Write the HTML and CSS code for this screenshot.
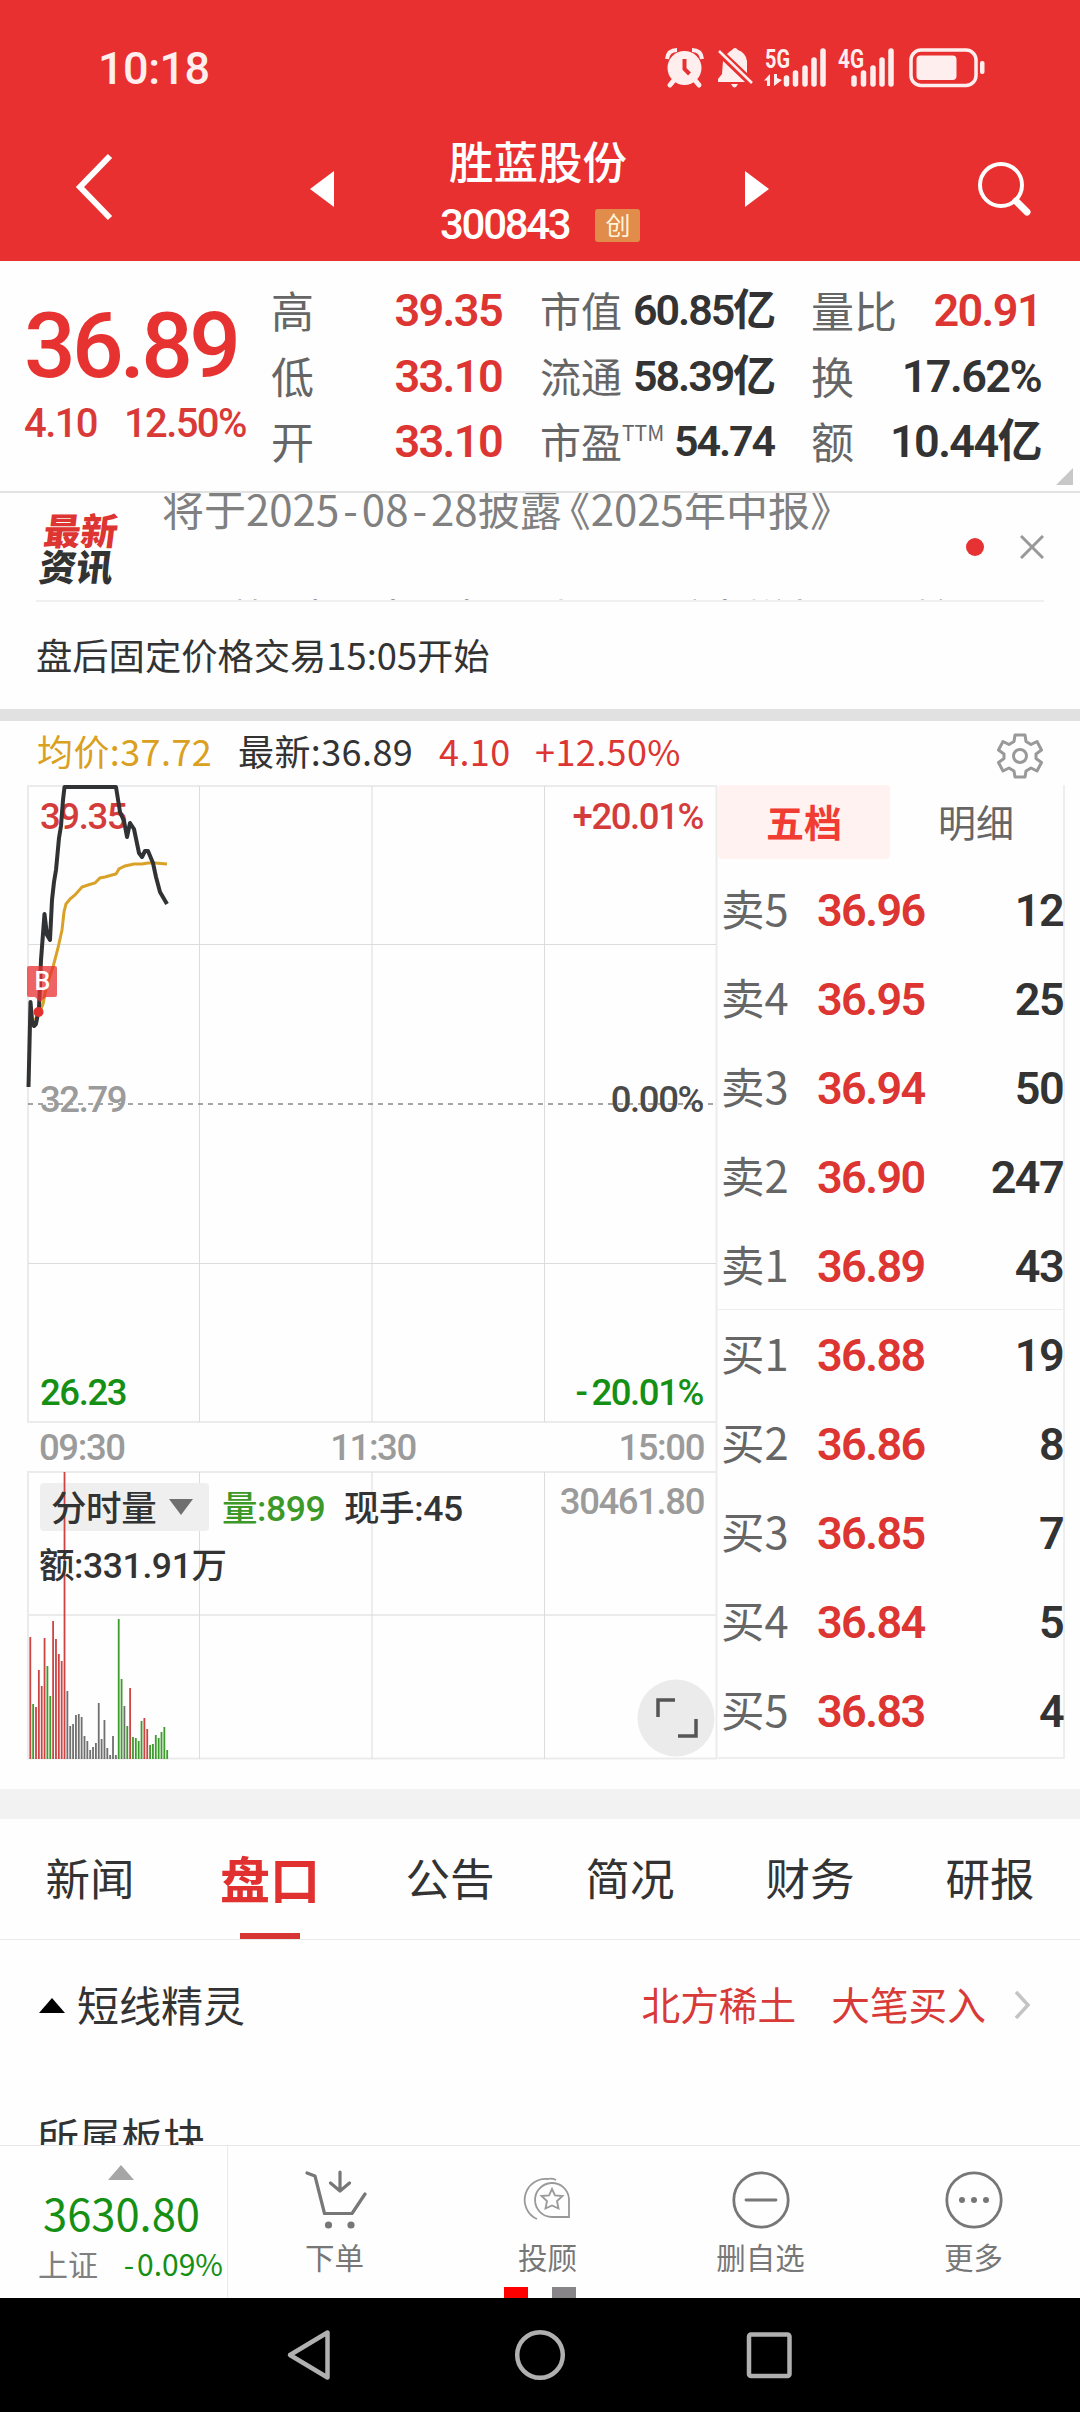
FILE: index.html
```html
<!DOCTYPE html>
<html lang="zh-CN">
<head>
  <meta charset="utf-8">
  <meta name="viewport" content="width=device-width, initial-scale=1.0">
  <title>胜蓝股份 300843</title>
  <link rel="stylesheet" href="styles.css">
</head>
<body>
  <header class="header">
    <div class="status-bar">
      <span class="clock num">10:18</span>
      <svg class="status-icons" width="326" height="44" viewBox="662 46 326 44" fill="#ffeeee">
        <!-- alarm -->
        <circle cx="684.5" cy="68" r="17"/>
        <path d="M667 59q1-9 10-9M702 59q-1-9-10-9" fill="none" stroke="#ffeeee" stroke-width="4"/>
        <path d="M675 79l-5 6M694 79l5 6" stroke="#ffeeee" stroke-width="5" stroke-linecap="round"/>
        <path d="M684.500 59v10l5 5" fill="none" stroke="#e83030" stroke-width="4"/>
        <!-- bell off -->
        <path d="M723 61L745 82H718V79L722 74ZM727 54Q730 51 732 50Q735 46 738 50Q746 53 747 61V73Z"/>
        <path d="M719 51L752 83" stroke="#ffeeee" stroke-width="2.600"/>
        <path d="M731 84h7q-3.500 7-7 0"/>
        <!-- sim 1 -->
        <text x="765" y="67.500" class="net" textLength="25" lengthAdjust="spacingAndGlyphs">5G</text>
        <path d="M770 86V74L764 80.500H767V86ZM774 74V86L782 80L777 78V74Z"/>
        <path d="M786.500 78v6M795.500 73v11M805 68v16M814 60v24M823 51v33" stroke="#ffeeee" stroke-width="5.500" stroke-linecap="round"/>
        <!-- sim 2 -->
        <text x="838" y="67.500" class="net" textLength="26" lengthAdjust="spacingAndGlyphs">4G</text>
        <path d="M854 78v6M863.500 73v11M873 68v16M882 60v24M891 51v33" stroke="#ffeeee" stroke-width="5.500" stroke-linecap="round"/>
        <!-- battery -->
        <rect x="911" y="50" width="65" height="35.500" rx="10" fill="none" stroke="#ffeeee" stroke-width="3.500"/>
        <rect x="916.500" y="55.500" width="40" height="24.500" rx="4"/>
        <rect x="980" y="61" width="4.500" height="13" rx="2"/>
      </svg>
    </div>
    <div class="title-bar">
      <svg class="back" width="40" height="68" viewBox="0 0 40 68"><path d="M35 3L5 34L35 65" fill="none" stroke="#fff" stroke-width="6"/></svg>
      <svg class="prev" width="24" height="36" viewBox="0 0 24 36"><path d="M24 0V36L0 18Z" fill="#fff"/></svg>
      <div class="stock">
        <div class="stock-name">胜蓝股份</div>
        <div class="stock-code"><span class="num">300843</span><span class="badge">创</span></div>
      </div>
      <svg class="next" width="24" height="36" viewBox="0 0 24 36"><path d="M0 0V36L24 18Z" fill="#fff"/></svg>
      <svg class="search" width="54" height="56" viewBox="0 0 54 56" fill="none" stroke="#fff"><circle cx="23" cy="24" r="21" stroke-width="4"/><path d="M38 40L49 51" stroke-width="7" stroke-linecap="round"/></svg>
    </div>
  </header>

  <section class="quote">
    <div class="price-box">
      <div class="price num">36.89</div>
      <div class="change num"><span>4.10</span><span>12.50%</span></div>
    </div>
    <dl class="stats stats-a">
      <div><dt>高</dt><dd class="num red">39.35</dd></div>
      <div><dt>低</dt><dd class="num red">33.10</dd></div>
      <div><dt>开</dt><dd class="num red">33.10</dd></div>
    </dl>
    <dl class="stats stats-b">
      <div><dt>市值</dt><dd class="num">60.85亿</dd></div>
      <div><dt>流通</dt><dd class="num">58.39亿</dd></div>
      <div><dt class="pe">市盈<sup>TTM</sup></dt><dd class="num">54.74</dd></div>
    </dl>
    <dl class="stats stats-c">
      <div><dt>量比</dt><dd class="num red">20.91</dd></div>
      <div><dt>换</dt><dd class="num">17.62%</dd></div>
      <div><dt>额</dt><dd class="num">10.44亿</dd></div>
    </dl>
    <i class="corner"></i>
  </section>

  <section class="news">
    <div class="news-logo"><span class="red">最新</span><span>资讯</span></div>
    <div class="news-text">
      <p>将于2025<span class="dash">-</span>08<span class="dash">-</span>28披露<span class="open">《</span>2025年中报》</p>
      <p class="upcoming">最近解读：本到机器人AI、手术增长：开始</p>
    </div>
    <i class="dot"></i>
    <svg class="close" width="24" height="24" viewBox="0 0 24 24"><path d="M1 1L23 23M23 1L1 23" stroke="#999" stroke-width="3"/></svg>
  </section>
  <div class="notice">盘后固定价格交易15:05开始</div>
  <div class="divider"></div>

  <div class="summary">
    <span class="avg">均价:37.72</span>
    <span class="last">最新:36.89</span>
    <span class="red diff">4.10</span>
    <span class="red pct">+12.50%</span>
    <svg class="gear" width="46" height="46" viewBox="-23 -23 46 46" fill="none" stroke="#999" stroke-width="3" stroke-linejoin="round">
      <path d="M-5-21H5L6-14.500L11-11.500L17-14.500L21.500-6L16-2V2.500L21.500 6.500L17 15L11 12L6 15L5 21H-5L-6 15L-11 12L-17 15L-21.500 6.500L-16 2.500V-2L-21.500-6L-17-14.500L-11-11.500L-6-14.500Z"/>
      <circle r="6.500"/>
    </svg>
  </div>

  <section class="board">
    <svg class="chart" width="718" height="976" viewBox="0 785 718 976">
      <g class="grid">
        <path d="M27 786H717M27 1422H717M27 1472H717M27 1615H717M27 1758.500H717" stroke-width="2"/>
        <path d="M28 786V1422M28 1472V1759M716.500 786V1759" stroke-width="2"/>
        <path class="thin" d="M28 944.500H716M28 1263.500H716M199.500 786V1422M372 786V1422M544.500 786V1422M199.500 1472V1759M372 1472V1759M544.500 1472V1759"/>
      </g>
      <path d="M28 1104H716" stroke="#888" stroke-width="1.500" stroke-dasharray="5 5"/>

      <rect x="40" y="1483" width="169" height="48" rx="4" fill="#f0eff0"/>
      <g id="volume"></g>

      <g class="axis">
        <text x="40" y="828.500" class="up">39.35</text>
        <text x="40" y="1112" class="flat">32.79</text>
        <text x="40" y="1405" class="down">26.23</text>
        <text x="703" y="828.500" class="up end">+20.01%</text>
        <text x="703" y="1112" class="mid end">0.00%</text>
        <text x="703" y="1405" class="down end">-<tspan dx="5">20.01%</tspan></text>
        <text x="39" y="1460" class="flat">09:30</text>
        <text x="373" y="1460" class="flat center">11:30</text>
        <text x="704" y="1460" class="flat end">15:00</text>
        <text x="704" y="1514" class="flat end">30461.80</text>
      </g>
      <g class="volume-info">
        <text x="51" y="1521">分时量</text>
        <path d="M169 1499H193L181 1515Z" fill="#706f70"/>
        <text x="222" y="1521" class="vol">量:899</text>
        <text x="344" y="1521">现手:45</text>
        <text x="39" y="1578">额:331.91万</text>
      </g>

      <polyline fill="none" stroke="#d9a127" stroke-width="3" points="35,1020 40,1011 43,1004 47,984 53,967 58,948 62,930 64,912 66,904 70,899 75,895 82,887 88,885 95,883 100,878 105,877 112,875 116,874 119,869 125,866 134,864 142,864 148,863 155,863 167,864"/>
      <polyline fill="none" stroke="#303234" stroke-width="4" stroke-linejoin="round" points="28.500,1087 30.500,1002 32,1020 34,1026 36,1024 39,1008 41,960 44.500,914 47,935 50,940 52,900 54,882 56,870 59,838 61,826 63,800 64.500,787 116,787 120,812 124,821 127,837 130,823 134,829 139,853 142,857 145,851 148,851 153,863 156,877 160,892 167,904"/>
      <g>
        <path d="M29 966H55Q57 966 57 968V995Q57 997 55 997H46L40 1002L35 997H29Q27 997 27 995V968Q27 966 29 966Z" fill="#e83030" opacity=".75"/>
        <text x="42.500" y="990" class="buy">B</text>
        <circle cx="38.500" cy="1012" r="5" fill="#e0332f"/>
      </g>
      <g fill="none" stroke="#555" stroke-width="3.500">
        <circle cx="676" cy="1718" r="38.500" fill="#ebebeb" stroke="none"/>
        <path d="M658 1717V1700H675M678 1736H696V1719"/>
      </g>
    </svg>

    <div class="book">
      <div class="book-tabs"><span class="active">五档</span><span>明细</span></div>
      <ul class="levels">
        <li><span>卖5</span><b class="num">36.96</b><em class="num">12</em></li>
        <li><span>卖4</span><b class="num">36.95</b><em class="num">25</em></li>
        <li><span>卖3</span><b class="num">36.94</b><em class="num">50</em></li>
        <li><span>卖2</span><b class="num">36.90</b><em class="num">247</em></li>
        <li class="split"><span>卖1</span><b class="num">36.89</b><em class="num">43</em></li>
        <li><span>买1</span><b class="num">36.88</b><em class="num">19</em></li>
        <li><span>买2</span><b class="num">36.86</b><em class="num">8</em></li>
        <li><span>买3</span><b class="num">36.85</b><em class="num">7</em></li>
        <li><span>买4</span><b class="num">36.84</b><em class="num">5</em></li>
        <li><span>买5</span><b class="num">36.83</b><em class="num">4</em></li>
      </ul>
    </div>
  </section>

  <nav class="tabs">
    <a>新闻</a><a class="active">盘口</a><a>公告</a><a>简况</a><a>财务</a><a>研报</a>
  </nav>
  <section class="detail">
    <div class="row">
      <i class="fold"></i>
      <span class="row-title">短线精灵</span>
      <span class="alert">北方稀土</span>
      <span class="alert">大笔买入</span>
      <svg width="18" height="30" viewBox="0 0 18 30"><path d="M3 2L15 15L3 28" fill="none" stroke="#c4c4c4" stroke-width="3.500"/></svg>
    </div>
    <div class="sector">所属板块</div>
  </section>

  <footer class="toolbar">
    <div class="index">
      <i class="expand"></i>
      <div class="index-value">3630.80</div>
      <div class="index-row"><span>上证</span><span class="green"><span class="minus">-</span>0.09%</span></div>
    </div>
    <a class="tool">
      <svg width="64" height="60" viewBox="302 2171 64 60" fill="none" stroke="#777" stroke-width="3.200" stroke-linecap="round" stroke-linejoin="round">
        <path d="M306 2174L314 2177L323.500 2214.500H351L364 2195M339 2173V2191M329.500 2184L339 2192L348.500 2184"/>
        <g fill="#777" stroke="none"><circle cx="327.500" cy="2226" r="3.600"/><circle cx="350" cy="2226" r="3.600"/></g>
      </svg>
      <span>下单</span>
    </a>
    <a class="tool">
      <svg width="64" height="60" viewBox="515 2171 64 60" fill="none" stroke="#999" stroke-width="1.800">
        <path d="M568 2218V2200A17 17 0 1 0 551 2218ZM536 2220A21 21 0 0 1 547 2180Q551 2179 555 2181"/>
        <path d="M551 2190L554 2196.500L561.500 2197L556 2202L557.500 2209.500L551 2206.500L544.500 2209.500L546 2202L540.500 2197L548 2196.500Z"/>
      </svg>
      <span>投顾</span>
    </a>
    <a class="tool">
      <svg width="64" height="60" viewBox="-32 -30 64 60" fill="none" stroke="#777" stroke-width="2.800"><circle r="27.200"/><path d="M-15 0H15" stroke-linecap="round"/></svg>
      <span>删自选</span>
    </a>
    <a class="tool">
      <svg width="64" height="60" viewBox="-32 -30 64 60" fill="none" stroke="#777" stroke-width="2.800"><circle r="27.200"/><g fill="#777" stroke="none"><circle cx="-12" r="3"/><circle r="3"/><circle cx="12" r="3"/></g></svg>
      <span>更多</span>
    </a>
    <div class="pager"><i class="on"></i><i></i></div>
  </footer>

  <div class="navbar">
    <svg width="520" height="56" viewBox="280 2327 520 56" fill="none" stroke="#b0b0b0" stroke-width="4.500" stroke-linejoin="round">
      <path d="M327.500 2332.500V2377.500L290 2355Z"/>
      <circle cx="540" cy="2355" r="22.800"/>
      <rect x="749" y="2334.500" width="40.500" height="41.500" rx="2"/>
    </svg>
  </div>

  <script>
    // one bar per minute: [height, color]
    var bars = [
      [122, "r"], [55, "g"], [52, "r"], [89, "r"], [73, "r"], [121, "r"], [93, "g"], [63, "g"], [138, "r"], [120, "r"],
      [105, "r"], [98, "r"], [287, "r"], [68, "k"], [33, "k"], [35, "k"], [44, "k"], [45, "k"], [42, "k"], [23, "k"],
      [18, "k"], [9, "k"], [12, "k"], [16, "k"], [56, "k"], [20, "k"], [39, "k"], [11, "k"], [4, "k"], [23, "k"],
      [4, "k"], [140, "g"], [80, "g"], [53, "k"], [33, "g"], [71, "r"], [22, "g"], [21, "g"], [18, "g"], [38, "g"],
      [41, "r"], [30, "r"], [14, "g"], [15, "g"], [24, "g"], [21, "g"], [27, "g"], [32, "g"], [9, "g"]
    ];
    var colors = { r: "#cc4444", g: "#3c9c2c", k: "#707070" };
    var volume = document.getElementById("volume");

    bars.forEach(function(bar, i) {
      var rect = document.createElementNS("http://www.w3.org/2000/svg", "rect");
      rect.setAttribute("x", 29.4 + i * 2.852);
      rect.setAttribute("y", 1759 - bar[0]);
      rect.setAttribute("width", 1.8);
      rect.setAttribute("height", bar[0]);
      rect.setAttribute("fill", colors[bar[1]]);
      volume.appendChild(rect);
    });
  </script>
</body>
</html>
```
FILE: styles.css
```css
* {
  box-sizing: border-box;
}

body {
  margin: 0;
  width: 1080px;
  height: 2412px;
  overflow: hidden;
  display: flex;
  flex-direction: column;
  font-family: "Noto Sans CJK SC", sans-serif;
  color: #333;
  background: #fefefe;
}

svg {
  display: block;
  flex: none;
}

dl, dd, p, ul {
  margin: 0;
  padding: 0;
}

.num {
  font-family: Roboto, "Noto Sans CJK SC", sans-serif;
}

.red {
  color: #dc3532;
}

.green {
  color: #159015;
}

/* header */
.header {
  height: 261px;
  flex: none;
  background: #e83030;
  color: #fff;
}

.status-bar {
  height: 136px;
  display: flex;
  justify-content: space-between;
  padding: 46px 92px 0 98px;
}

.clock {
  font-size: 45px;
  font-weight: 500;
  line-height: 46px;
  letter-spacing: -.5px;
  color: #ffeeee;
}

.net {
  font: bold 25px Roboto, sans-serif;
}

.title-bar {
  height: 125px;
  display: flex;
}

.back {
  margin: 17px 0 0 75px;
}

.prev {
  margin: 35px 0 0 195px;
}

.stock {
  width: 411px;
  flex: none;
  padding-left: 106px;
}

.stock-name {
  font-size: 44.5px;
  font-weight: 500;
  line-height: 48px;
  padding-left: 9px;
}

.stock-code {
  display: flex;
  align-items: center;
  margin-top: 16px;
  font-size: 42px;
  font-weight: 500;
  line-height: 50px;
  letter-spacing: -2.300px;
}

.badge {
  width: 45px;
  height: 33px;
  margin-left: 26px;
  border-radius: 3px;
  background: #e18c4a;
  color: #fff5dc;
  font-size: 25px;
  font-weight: 400;
  line-height: 31px;
  letter-spacing: 0;
  text-align: center;
}

.next {
  margin-top: 35px;
}

.search {
  margin: 25px 0 0 209px;
}

/* quote */
.quote {
  position: relative;
  height: 232px;
  flex: none;
  display: flex;
  border-bottom: 2px solid #e2e2e2;
}

.price-box {
  width: 271px;
  padding-left: 24px;
}

.price {
  margin-top: 35px;
  font-size: 91px;
  font-weight: 500;
  line-height: 100px;
  letter-spacing: -3.800px;
  color: #e63230;
}

.change {
  display: flex;
  gap: 27px;
  margin-top: 3px;
  font-size: 40px;
  font-weight: 500;
  line-height: 50px;
  letter-spacing: -1.600px;
  white-space: nowrap;
  color: #d93a38;
}

.stats {
  padding-top: 17px;
}

.stats div {
  display: flex;
  justify-content: space-between;
  height: 65.500px;
  line-height: 65px;
  white-space: nowrap;
}

.stats dt {
  font-size: 43px;
  line-height: 62px;
  color: #666;
}

.stats dd {
  font-size: 45px;
  font-weight: 600;
  letter-spacing: -1.600px;
}

.stats-a {
  width: 231px;
}

.stats-b {
  width: 234px;
  margin-left: 38px;
}

.stats-b dt {
  font-size: 41px;
}

.stats-b dd {
  font-size: 43px;
  letter-spacing: -2.100px;
}

.stats sup {
  font-size: 21px;
  line-height: 0;
  vertical-align: 17px;
}

.stats-c {
  width: 230px;
  margin-left: 37px;
}

.corner {
  position: absolute;
  right: 7px;
  bottom: 6px;
  border-left: 17px solid transparent;
  border-bottom: 17px solid #c8c8c8;
}

/* news */
.news {
  height: 109px;
  flex: none;
  display: flex;
  align-items: center;
  margin: 0 36px;
  border-bottom: 2px solid #f0f0f0;
  overflow: hidden;
}

.news-logo {
  width: 126px;
  padding: 0 0 0 6px;
  display: flex;
  flex-direction: column;
  font-size: 37px;
  font-weight: 900;
  line-height: 36px;
  transform: skewX(-7deg);
}

.news-text {
  width: 767px;
  height: 109px;
  font-size: 42px;
  line-height: 60px;
  color: #808080;
  white-space: nowrap;
}

.news-text p {
  margin-top: -14px;
  height: 60px;
}

.news-text .upcoming {
  margin-top: 49px;
}

.dash {
  margin: 0 4px;
}

.open {
  margin-left: -13px;
}

.dot {
  width: 18px;
  height: 18px;
  margin-left: 37px;
  border-radius: 50%;
  background: #e63232;
}

.close {
  margin-left: 36px;
}

.notice {
  height: 107px;
  flex: none;
  padding-left: 36px;
  font-size: 36.300px;
  line-height: 104px;
}

.divider {
  height: 12px;
  flex: none;
  background: #e1e1e1;
}

.summary {
  height: 64px;
  flex: none;
  display: flex;
  padding-left: 37px;
  font-size: 36px;
  line-height: 58px;
  letter-spacing: .4px;
  white-space: nowrap;
}

.avg {
  width: 201px;
  color: #daa020;
}

.last {
  width: 201px;
}

.diff {
  width: 96px;
}

.pct {
  width: 462px;
}

.gear {
  margin-top: 12px;
}

/* chart and order book */
.board {
  height: 1004px;
  flex: none;
  display: flex;
}

.grid path {
  fill: none;
  stroke: #ebebec;
}

.grid .thin {
  stroke: #dcdcdc;
}

.axis text {
  font: 500 36.500px Roboto, sans-serif;
  letter-spacing: -1.400px;
}

.axis .up {
  fill: #d43c3c;
}

.axis .down {
  fill: #159015;
}

.axis .flat {
  fill: #9b9b9b;
}

.axis .mid {
  fill: #4a4a4a;
}

.axis .end {
  text-anchor: end;
}

.axis .center {
  text-anchor: middle;
}

.volume-info text {
  font: 500 35.500px Roboto, "Noto Sans CJK SC", sans-serif;
  fill: #333;
  letter-spacing: -.4px;
}

.volume-info .vol {
  fill: #3c9828;
}

.buy {
  font: 500 25px Roboto, sans-serif;
  fill: #fff;
  text-anchor: middle;
}

.book {
  width: 347px;
  height: 974px;
  border-right: 2px solid #eee;
  border-bottom: 2px solid #eee;
}

.book-tabs {
  display: flex;
  height: 80px;
}

.book-tabs span {
  width: 172px;
  height: 74px;
  font-size: 38px;
  line-height: 72px;
  text-align: center;
  color: #666;
}

.book-tabs .active {
  border-radius: 4px;
  background: #fff2f1;
  color: #f03c33;
  font-weight: 700;
}

.levels {
  list-style: none;
}

.levels li {
  display: flex;
  height: 89px;
  padding-left: 3px;
  line-height: 91px;
}

.levels .split {
  border-bottom: 1px solid #eee;
}

.levels span {
  width: 96px;
  font-size: 43.500px;
  line-height: 85px;
  color: #666;
}

.levels b,
.levels em {
  font-size: 45px;
  font-style: normal;
  font-weight: 600;
  letter-spacing: -1.600px;
}

.levels b {
  color: #dc3532;
}

.levels em {
  flex: 1;
  text-align: right;
}

/* tabs */
.tabs {
  height: 151px;
  flex: none;
  display: flex;
  border-top: 30px solid #f2f2f2;
  border-bottom: 1px solid #eaeaea;
}

.tabs a {
  position: relative;
  width: 180px;
  font-size: 44.500px;
  line-height: 116px;
  text-align: center;
}

.tabs .active {
  font-size: 50px;
  font-weight: 700;
  color: #e03030;
}

.tabs .active::after {
  content: "";
  position: absolute;
  left: 60px;
  bottom: 0;
  width: 60px;
  height: 6px;
  background: #d83535;
}

.detail {
  height: 205px;
  flex: none;
  overflow: hidden;
}

.row {
  height: 130px;
  display: flex;
  align-items: center;
  padding: 0 49px 0 39px;
}

.fold {
  border: 13.500px solid transparent;
  border-top: 0;
  border-bottom: 15px solid #000;
}

.row-title {
  flex: 1;
  margin-left: 12px;
  font-size: 42px;
  line-height: 60px;
  padding-bottom: 3px;
}

.alert {
  margin-right: 35px;
  font-size: 38.700px;
  line-height: 60px;
  padding-bottom: 4px;
  color: #d83a38;
}

.alert + svg {
  margin-left: -8px;
}

.sector {
  padding-left: 37px;
  font-size: 42px;
  line-height: 60px;
  margin-top: 36px;
}

/* bottom toolbar */
.toolbar {
  position: relative;
  height: 153px;
  flex: none;
  display: flex;
  background: #fefefe;
  border-top: 1px solid #e8e8e8;
}

.index {
  width: 228px;
  padding-top: 19px;
  border-right: 1px solid #eaeaea;
}

.expand {
  display: block;
  width: 26px;
  margin-left: 108px;
  border: 13px solid transparent;
  border-top: 0;
  border-bottom: 15px solid #a6a6a6;
}

.index-value {
  margin: 8px 0 0 43px;
  font-size: 43.500px;
  line-height: 50px;
  color: #159015;
}

.index-row {
  display: flex;
  justify-content: space-between;
  padding: 2px 4px 0 38px;
  font-size: 30px;
  line-height: 46px;
  color: #808080;
}

.minus {
  margin-right: 3px;
}

.tool {
  width: 213px;
  padding-top: 24px;
  display: flex;
  flex-direction: column;
  align-items: center;
  font-size: 29.500px;
  line-height: 50px;
  color: #777;
}

.tool svg {
  margin-bottom: 1px;
}

.pager {
  position: absolute;
  left: 504px;
  bottom: 0;
  display: flex;
  gap: 24px;
}

.pager i {
  width: 24px;
  height: 11px;
  background: #888588;
}

.pager .on {
  background: #f00;
}

.navbar {
  height: 114px;
  flex: none;
  padding: 29px 0 0 280px;
  background: #000;
}
```
